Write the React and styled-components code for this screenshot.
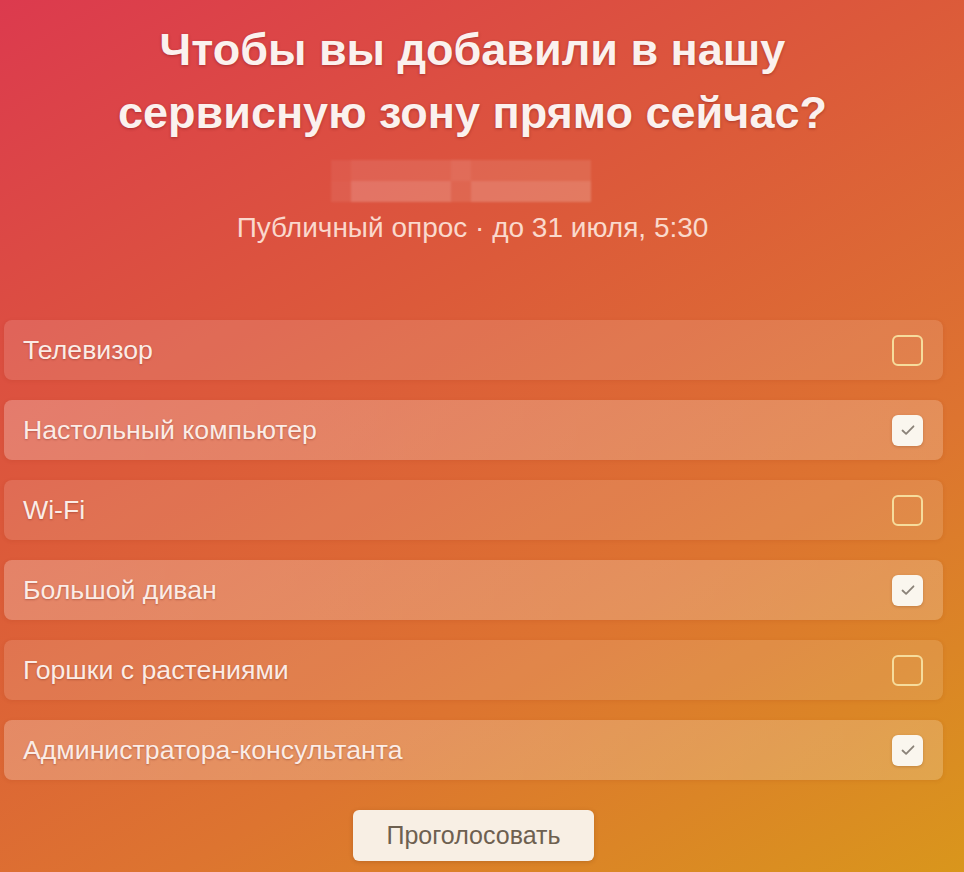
import React from 'react'
import styled, { createGlobalStyle } from 'styled-components'

const GlobalStyle = createGlobalStyle`
  html, body {
    margin: 0;
    padding: 0;
  }
  body {
    font-family: "Liberation Sans", Arial, sans-serif;
  }
`

const options = [
  { label: 'Телевизор', checked: false },
  { label: 'Настольный компьютер', checked: true },
  { label: 'Wi-Fi', checked: false },
  { label: 'Большой диван', checked: true },
  { label: 'Горшки с растениями', checked: false },
  { label: 'Администратора-консультанта', checked: true },
]

const CheckIcon = () => (
  <svg width="18" height="18" viewBox="0 0 18 18" fill="none">
    <path d="M3.5 9.5l3.6 3.4 7.4-7.6" stroke="#8a8278" strokeWidth="1.8" strokeLinecap="round" strokeLinejoin="round" />
  </svg>
)

const App = () => {
  return (
    <Page>
      <GlobalStyle />
      <Header>
        <Title>
          Чтобы вы добавили в нашу
          <br />
          сервисную зону прямо сейчас?
        </Title>
        <Mosaic>
          <MosaicRow>
            <Block $w={20} $o={0.06} />
            <Block $w={100} $o={0.1} />
            <Block $w={20} $o={0.14} />
            <Block $w={120} $o={0.1} />
          </MosaicRow>
          <MosaicRow>
            <Block $w={20} $o={0.08} />
            <Block $w={100} $o={0.2} />
            <Block $w={20} $o={0.1} />
            <Block $w={120} $o={0.2} />
          </MosaicRow>
        </Mosaic>
        <Subtitle>Публичный опрос · до 31 июля, 5:30</Subtitle>
      </Header>
      <List>
        {options.map(o => (
          <Option key={o.label} $checked={o.checked}>
            <Label>{o.label}</Label>
            <Box $checked={o.checked}>{o.checked && <CheckIcon />}</Box>
          </Option>
        ))}
      </List>
      <Footer>
        <VoteButton>Проголосовать</VoteButton>
      </Footer>
    </Page>
  )
}

export default App

const Page = styled.div`
  width: 964px;
  height: 872px;
  box-sizing: border-box;
  overflow: hidden;
  background: linear-gradient(150deg, #dc3a4e 0%, #dc5a3a 38%, #dd7430 68%, #d9961c 100%);
  display: flex;
  flex-direction: column;
`

const Header = styled.div`
  display: flex;
  flex-direction: column;
  align-items: center;
  padding: 18px 19px 0 0;
`

const Title = styled.h1`
  margin: 0;
  font-family: "Liberation Sans", Arial, sans-serif;
  font-weight: 700;
  font-size: 45px;
  line-height: 63px;
  color: #fbf1ee;
  text-align: center;
  text-shadow: 0 1px 3px rgba(110, 20, 20, 0.45);
`

const Mosaic = styled.div`
  margin-top: 16px;
  margin-right: 24px;
  display: flex;
  flex-direction: column;
  filter: blur(1px);
`

const MosaicRow = styled.div`
  display: flex;
  height: 21px;
`

const Block = styled.div`
  width: ${p => p.$w}px;
  background: rgba(255, 255, 255, ${p => p.$o});
`

const Subtitle = styled.div`
  margin-top: 12px;
  font-size: 28px;
  line-height: 28px;
  color: rgba(255, 236, 226, 0.88);
`

const List = styled.div`
  display: flex;
  flex-direction: column;
  gap: 20px;
  margin-top: 78px;
  padding: 0 21px 0 4px;
`

const Option = styled.div`
  height: 60px;
  border-radius: 8px;
  display: flex;
  align-items: center;
  justify-content: space-between;
  padding: 0 20px 0 19px;
  background: ${p =>
    p.$checked
      ? 'linear-gradient(90deg, rgba(255,255,255,0.24), rgba(255,255,255,0.2))'
      : 'rgba(255, 255, 255, 0.13)'};
  box-shadow: 0 1px 4px rgba(140, 40, 20, 0.12);
`

const Label = styled.span`
  font-size: 26.7px;
  color: #fbece6;
  text-shadow: 0 1px 2px rgba(110, 30, 20, 0.35);
`

const Box = styled.div`
  width: 31px;
  height: 31px;
  box-sizing: border-box;
  border-radius: 6px;
  display: flex;
  align-items: center;
  justify-content: center;
  border: ${p => (p.$checked ? 'none' : '2px solid #f6dc9c')};
  background: ${p => (p.$checked ? '#faf6ee' : 'transparent')};
  box-shadow: ${p => (p.$checked ? '0 1px 3px rgba(120,60,20,0.3)' : 'none')};
`

const Footer = styled.div`
  display: flex;
  justify-content: center;
  margin-top: 30px;
  padding-right: 17px;
`

const VoteButton = styled.button`
  width: 241px;
  height: 51px;
  border: none;
  border-radius: 6px;
  background: #f8efe4;
  font-family: "Liberation Sans", Arial, sans-serif;
  font-size: 25px;
  color: #6e6050;
  box-shadow: 0 1px 4px rgba(120, 60, 20, 0.3);
  cursor: pointer;
`
